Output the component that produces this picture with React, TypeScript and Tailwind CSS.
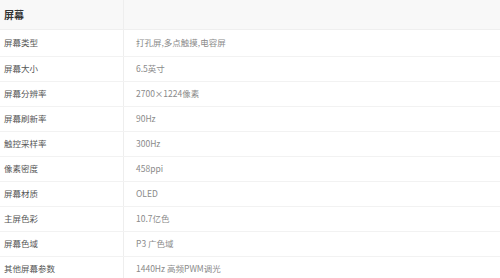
const specs = [
  { label: '屏幕类型', value: '打孔屏,多点触摸,电容屏' },
  { label: '屏幕大小', value: '6.5英寸' },
  { label: '屏幕分辨率', value: '2700×1224像素' },
  { label: '屏幕刷新率', value: '90Hz' },
  { label: '触控采样率', value: '300Hz' },
  { label: '像素密度', value: '458ppi' },
  { label: '屏幕材质', value: 'OLED' },
  { label: '主屏色彩', value: '10.7亿色' },
  { label: '屏幕色域', value: 'P3 广色域' },
  { label: '其他屏幕参数', value: '1440Hz 高频PWM调光' },
];

const App = () => {
  return (
    <div
      className="w-[500px] h-[278px] overflow-hidden bg-white"
      style={{ fontFamily: '"Noto Sans CJK SC", "Liberation Sans", sans-serif' }}
    >
      <div className="flex h-[30px] bg-[#f8f8f8] border-b border-[#efefef]">
        <div className="w-[124px] border-r border-[#eeeeee] flex items-center pl-[4px] pb-[1px] text-[10px] font-bold text-[#333]">
          屏幕
        </div>
        <div className="flex-1" />
      </div>
      {specs.map((s, i) => (
        <div
          key={s.label}
          className={`flex border-b border-[#f2f2f2] ${i === 0 ? 'h-[27px]' : 'h-[25px]'}`}
        >
          <div className="w-[124px] border-r border-[#eeeeee] flex items-center pl-[4px] pb-[2px] text-[8.5px] text-[#555]">
            {s.label}
          </div>
          <div className="flex-1 flex items-center pl-[12px] pb-[2px] text-[8.5px] text-[#8a8a8a]">
            {s.value}
          </div>
        </div>
      ))}
    </div>
  );
};

export default App;
